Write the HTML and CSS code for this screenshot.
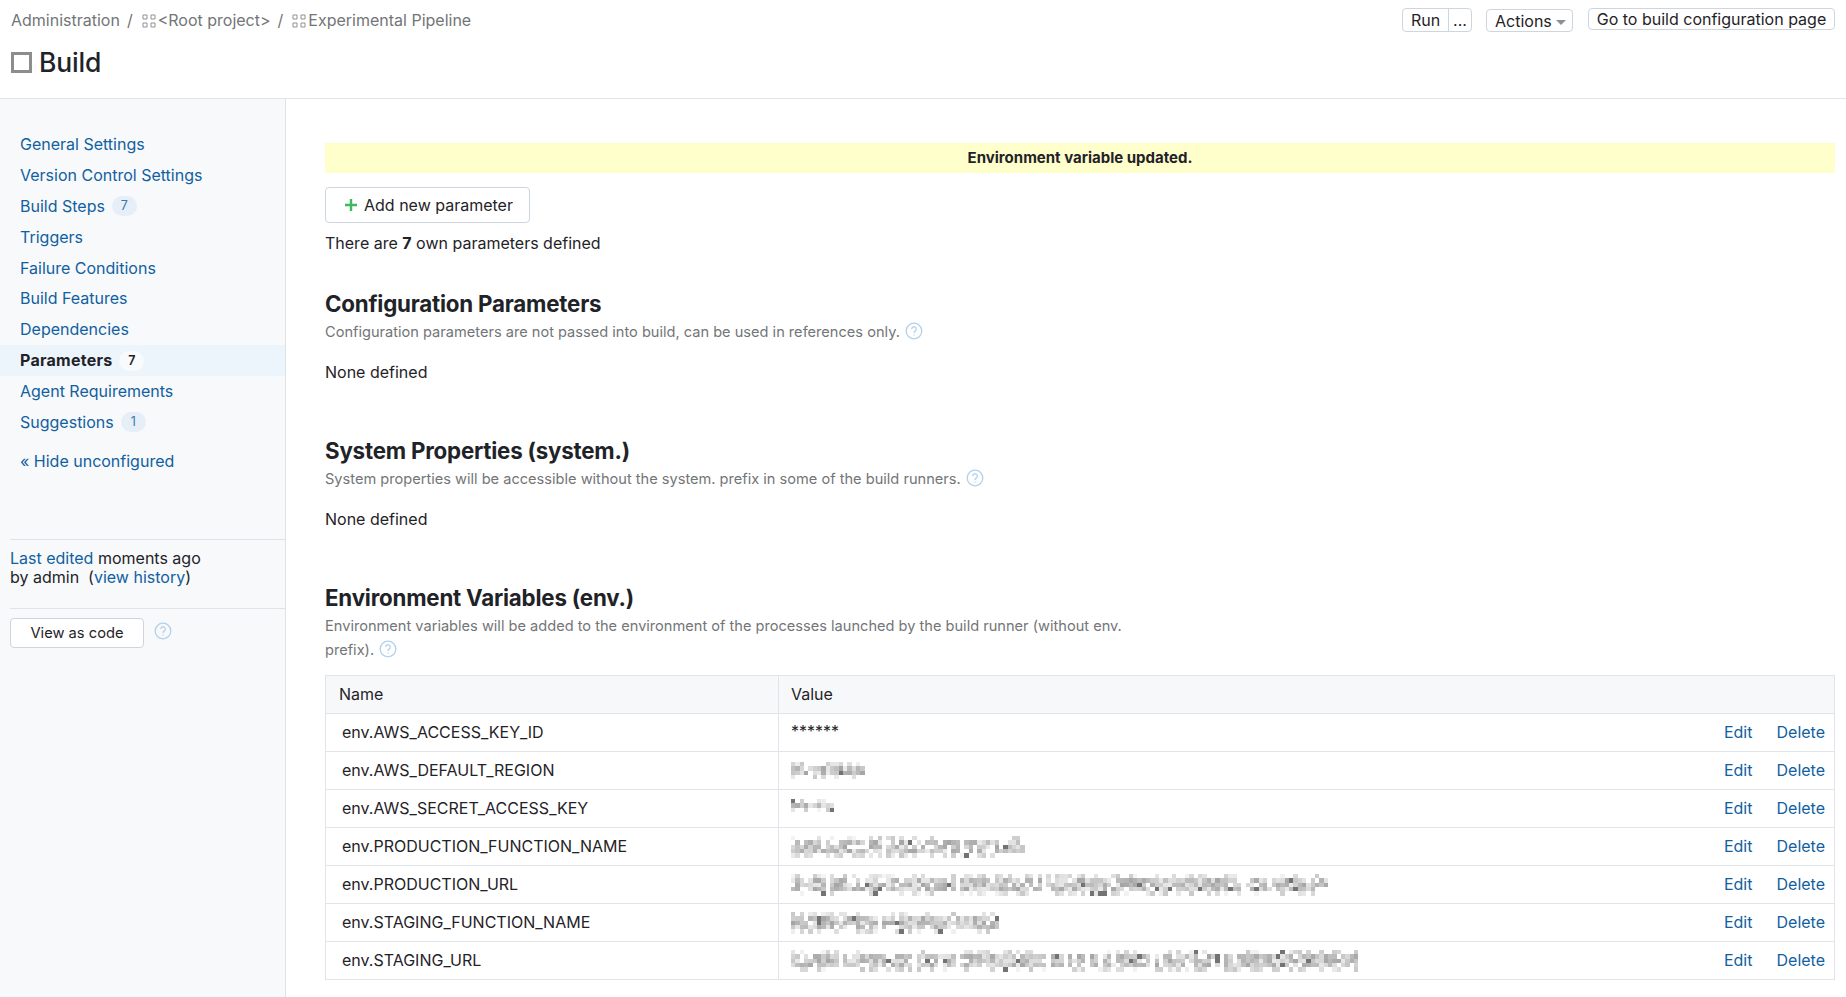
FILE: index.html
```html
<!DOCTYPE html>
<html lang="en">
<head>
<meta charset="utf-8">
<title>Build — Parameters</title>
<link rel="stylesheet" href="styles.css">
</head>
<body>
<header class="top">
  <div class="top-left">
    <nav class="crumbs">
      <span>Administration</span><span class="sep">/</span>
      <svg class="grid-ic" viewBox="0 0 14 14"><path d="M1 1h4v4H1zM9 1h4v4H9zM1 9h4v4H1zM9 9h4v4H9z"/></svg><span>&lt;Root project&gt;</span><span class="sep">/</span>
      <svg class="grid-ic" viewBox="0 0 14 14"><path d="M1 1h4v4H1zM9 1h4v4H9zM1 9h4v4H1zM9 9h4v4H9z"/></svg><span>Experimental Pipeline</span>
    </nav>
    <h1 class="title"><span class="check"></span>Build</h1>
  </div>
  <div class="top-actions">
    <div class="btn-group"><span class="tbtn">Run</span><span class="tbtn more">...</span></div>
    <span class="tbtn single actions">Actions<i class="caret"></i></span>
    <span class="tbtn single go">Go to build configuration page</span>
  </div>
</header>
<div class="layout">
  <aside class="side">
    <ul class="menu">
      <li><a>General Settings</a></li>
      <li><a>Version Control Settings</a></li>
      <li><a>Build Steps</a><span class="count">7</span></li>
      <li><a>Triggers</a></li>
      <li><a>Failure Conditions</a></li>
      <li><a>Build Features</a></li>
      <li><a>Dependencies</a></li>
      <li class="active"><a>Parameters</a><span class="count">7</span></li>
      <li><a>Agent Requirements</a></li>
      <li><a>Suggestions</a><span class="count">1</span></li>
    </ul>
    <a class="hide">« Hide unconfigured</a>
    <div class="edited"><a>Last edited</a> moments ago<br>by admin &nbsp;(<a>view history</a>)</div>
    <div class="code-row">
      <span class="code-btn">View as code</span>
      <svg class="help big" viewBox="0 0 18 18"><circle cx="9" cy="9" r="7.8"/><path d="M6.7 7a2.3 2.3 0 1 1 3.7 1.9c-.9.6-1.4 1-1.4 2M9 12.4v1.2"/></svg>
    </div>
  </aside>
  <main class="main">
    <div class="notice">Environment variable updated.</div>
    <span class="add-btn"><svg class="plus" viewBox="0 0 14 14"><path d="M7 1v12M1 7h12"/></svg>Add new parameter</span>
    <p class="own">There are <b>7</b> own parameters defined</p>

    <section class="block first">
      <h2>Configuration Parameters</h2>
      <p class="desc">Configuration parameters are not passed into build, can be used in references only. <svg class="help" viewBox="0 0 18 18"><circle cx="9" cy="9" r="7.8"/><path d="M6.7 7a2.3 2.3 0 1 1 3.7 1.9c-.9.6-1.4 1-1.4 2M9 12.4v1.2"/></svg></p>
      <p class="none">None defined</p>
    </section>

    <section class="block">
      <h2>System Properties (system.)</h2>
      <p class="desc">System properties will be accessible without the system. prefix in some of the build runners. <svg class="help" viewBox="0 0 18 18"><circle cx="9" cy="9" r="7.8"/><path d="M6.7 7a2.3 2.3 0 1 1 3.7 1.9c-.9.6-1.4 1-1.4 2M9 12.4v1.2"/></svg></p>
      <p class="none">None defined</p>
    </section>

    <section class="block env">
      <h2>Environment Variables (env.)</h2>
      <p class="desc wrap">Environment variables will be added to the environment of the processes launched by the build runner (without env. prefix). <svg class="help" viewBox="0 0 18 18"><circle cx="9" cy="9" r="7.8"/><path d="M6.7 7a2.3 2.3 0 1 1 3.7 1.9c-.9.6-1.4 1-1.4 2M9 12.4v1.2"/></svg></p>
      <table class="params">
        <colgroup><col class="col-name"><col><col class="col-edit"><col class="col-del"></colgroup>
        <thead><tr><th class="c-name">Name</th><th class="c-val" colspan="3">Value</th></tr></thead>
        <tbody>
          <tr><td class="c-name">env.AWS_ACCESS_KEY_ID</td><td class="c-val stars">******</td><td class="act"><a>Edit</a></td><td class="act del"><a>Delete</a></td></tr>
          <tr><td class="c-name">env.AWS_DEFAULT_REGION</td><td class="c-val"><svg class="mosaic" data-w="77" data-rows="4" data-seed="11" data-d="0.75"></svg></td><td class="act"><a>Edit</a></td><td class="act del"><a>Delete</a></td></tr>
          <tr><td class="c-name">env.AWS_SECRET_ACCESS_KEY</td><td class="c-val"><svg class="mosaic thin" data-w="47" data-rows="3" data-seed="23" data-d="0.7"></svg></td><td class="act"><a>Edit</a></td><td class="act del"><a>Delete</a></td></tr>
          <tr><td class="c-name">env.PRODUCTION_FUNCTION_NAME</td><td class="c-val"><svg class="mosaic" data-w="238" data-rows="5" data-seed="37" data-d="0.68"></svg></td><td class="act"><a>Edit</a></td><td class="act del"><a>Delete</a></td></tr>
          <tr><td class="c-name">env.PRODUCTION_URL</td><td class="c-val"><svg class="mosaic" data-w="540" data-rows="5" data-seed="41" data-d="0.72"></svg></td><td class="act"><a>Edit</a></td><td class="act del"><a>Delete</a></td></tr>
          <tr><td class="c-name">env.STAGING_FUNCTION_NAME</td><td class="c-val"><svg class="mosaic" data-w="211" data-rows="5" data-seed="53" data-d="0.68"></svg></td><td class="act"><a>Edit</a></td><td class="act del"><a>Delete</a></td></tr>
          <tr><td class="c-name">env.STAGING_URL</td><td class="c-val"><svg class="mosaic" data-w="571" data-rows="5" data-seed="67" data-d="0.72"></svg></td><td class="act"><a>Edit</a></td><td class="act del"><a>Delete</a></td></tr>
        </tbody>
      </table>
    </section>
  </main>
</div>
<script src="mosaic.js"></script>
</body>
</html>
```
FILE: styles.css
```css
* { box-sizing: border-box; }
html, body { margin: 0; height: 100%; }
body { font: 16px/19px Inter, "Liberation Sans", sans-serif; color: #1f2328; background: #fff; overflow: hidden; }
a { color: #11609f; }
p, h1, h2, ul { margin: 0; padding: 0; }

.top { height: 99px; border-bottom: 1px solid #dfe5eb; display: flex; justify-content: space-between; padding: 11px 11px 0 11px; }
.crumbs { display: flex; align-items: center; height: 19px; color: #737577; }
.sep { margin: 0 9px 0 7px; }
.grid-ic { width: 14px; height: 14px; margin-right: 2px; fill: none; stroke: #8f9194; stroke-width: 1; }
.title { display: flex; align-items: center; font-size: 26.5px; font-weight: 500; line-height: 32px; margin-top: 16px; letter-spacing: -.2px; }
.check { width: 21px; height: 21px; border: 3px solid #8d8d8f; margin-right: 7px; }

.top-actions { display: flex; align-items: flex-start; margin-top: -3px; }
.btn-group { display: flex; width: 70px; height: 24px; margin-right: 14px; border: 1px solid #cdd6df; border-radius: 4px; }
.tbtn { line-height: 22px; padding: 0 8px; white-space: nowrap; }
.btn-group .tbtn:first-child { width: 45px; text-align: center; padding: 0; }
.more { flex: 1; border-left: 1px solid #cdd6df; padding: 0; text-align: center; }
.single { border: 1px solid #cdd6df; border-radius: 4px; }
.actions { display: block; width: 87px; height: 23px; margin: 1px 15px 0 0; }
.go { display: block; width: 247px; height: 22px; line-height: 20px; padding: 0; text-align: center; }
.caret { display: inline-block; margin-left: 4px; vertical-align: 2px; border-left: 5px solid transparent; border-right: 5px solid transparent; border-top: 5px solid #8d8f92; }

.layout { display: flex; height: 898px; }
.side { width: 286px; flex: none; background: #f7f9fb; border-right: 1px solid #dfe3e8; padding-top: 30px; }
.menu { list-style: none; }
.menu li { height: 30.9px; padding-left: 20px; display: flex; align-items: center; }
.count { margin-left: 7px; min-width: 25px; height: 20px; border-radius: 10px; background: #e6eff8; color: #3d77ad; font-size: 12.5px; line-height: 19px; text-align: center; }
.active { background: #edf5fc; }
.active a { color: #1f2328; font-weight: 700; letter-spacing: .25px; }
.active .count { background: #f8fafc; color: #1f2328; font-weight: 600; }
.hide { display: block; margin: 14px 0 0 20px; }
.edited { margin: 68px -1px 0 10px; padding: 9px 0 21px; border-top: 1px solid #dfe3e8; border-bottom: 1px solid #dfe3e8; }
.code-row { display: flex; align-items: center; padding: 9px 0 0 10px; }
.code-btn { width: 134px; height: 30px; text-align: center; font-size: 14.7px; line-height: 28px; border: 1px solid #cdd6df; border-radius: 4px; background: #fff; }
.help { width: 18px; height: 18px; margin-left: 1px; vertical-align: -3px; fill: none; stroke: #b4d1ea; stroke-width: 1.3; }
.help.big { margin-left: 10px; margin-top: -3px; }

.main { flex: 1; padding: 44px 11px 0 39px; min-width: 0; }
.notice { height: 30px; background: #ffffcc; text-align: center; font-size: 15px; font-weight: 700; line-height: 30px; }
.add-btn { display: flex; align-items: center; width: 205px; height: 36px; margin-top: 14px; padding-left: 18px; border: 1px solid #cdd6df; border-radius: 4px; }
.plus { width: 14px; height: 14px; margin-right: 6px; fill: none; stroke: #3fb860; stroke-width: 2.4; }
.own { margin-top: 11px; }
.block.first { margin-top: 37px; }
h2 { font-size: 22.3px; line-height: 28px; font-weight: 700; letter-spacing: -.2px; }
.desc { font-size: 14.6px; color: #737577; margin-top: 2px; line-height: 24px; }
.none { margin-top: 19px; height: 74px; }
.desc.wrap { width: 830px; }
.params { border-collapse: collapse; width: 1510px; margin-top: 13px; table-layout: fixed; border: 1px solid #e0e5ea; }
.col-name { width: 453px; }
.col-edit { width: 60px; }
.col-del { width: 82px; }
.params th { height: 38px; background: #f7f8fa; font-weight: 400; text-align: left; padding: 0 12px; border-bottom: 1px solid #e0e5ea; }
.params th.c-name { padding-left: 13px; border-right: 1px solid #e0e5ea; }
.params td { height: 38px; padding: 0; border-bottom: 1px solid #e0e5ea; }
.params td.c-name { padding-left: 16px; border-right: 1px solid #e0e5ea; }
.params td.c-val { padding-left: 12px; }
.params td.stars { padding-bottom: 3px; }
.params .act { text-align: right; }
.params .del { padding-right: 9px; }
.mosaic { display: block; }
.mosaic.thin { margin-top: -6px; }
```
FILE: mosaic.js
```js
// Draws the redacted (pixelated) parameter values as grey mosaic blocks.
document.querySelectorAll(".mosaic").forEach(function (svg) {
  var width = +svg.dataset.w, rows = +svg.dataset.rows;
  var seed = +svg.dataset.seed, density = +svg.dataset.d;
  var cell = 4.33;
  var ns = "http://www.w3.org/2000/svg";
  function rand() {
    seed = (seed * 16807) % 2147483647;
    return seed / 2147483647;
  }
  svg.setAttribute("width", width);
  svg.setAttribute("height", Math.ceil(rows * cell));
  svg.setAttribute("shape-rendering", "crispEdges");
  var columns = Math.floor(width / cell);
  for (var c = 0; c < columns; c++) {
    var gap = c > 0 && c < columns - 1 && rand() < 0.07;
    for (var y = 0; y < rows; y++) {
      var edge = y === 0 || y === rows - 1;
      var chance = gap ? 0.15 : edge ? density * 0.55 : density * 1.25;
      if (rand() > chance) continue;
      var dark = rand() < 0.04;
      var base = edge ? 200 : 165;
      var shade = dark ? 115 : Math.round(base + rand() * (edge ? 45 : 70));
      var rect = document.createElementNS(ns, "rect");
      rect.setAttribute("x", c * cell);
      rect.setAttribute("y", y * cell);
      rect.setAttribute("width", cell);
      rect.setAttribute("height", cell);
      rect.setAttribute("fill", "rgb(" + shade + "," + shade + "," + shade + ")");
      svg.appendChild(rect);
    }
  }
});
```
